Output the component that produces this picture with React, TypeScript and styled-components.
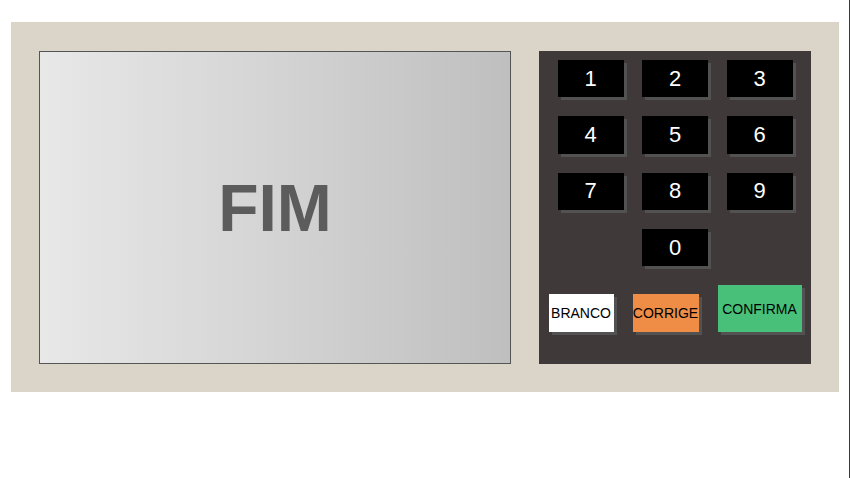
import React from "react";
import styled, { createGlobalStyle } from "styled-components";

const Global = createGlobalStyle`
  html, body { margin: 0; padding: 0; background: #ffffff; }
  body { font-family: "Liberation Sans", Arial, sans-serif; }
`;

const Page = styled.div`
  box-sizing: border-box;
  width: 850px;
  min-height: 100vh;
  border-right: 1px solid #3c3450;
  padding: 22px 0 0 11px;
`;

const Urna = styled.div`
  box-sizing: border-box;
  width: 828px;
  height: 370px;
  background: #dbd4c9;
  padding: 29px 28px 28px 28px;
  display: flex;
  gap: 28px;
`;

const Screen = styled.div`
  box-sizing: border-box;
  width: 472px;
  height: 313px;
  border: 1px solid #555555;
  background: linear-gradient(to right, #e8e8e8, #bfbfbf);
  display: flex;
  align-items: center;
  justify-content: center;
`;

const BigText = styled.div`
  font-family: "Liberation Sans", Arial, sans-serif;
  font-weight: bold;
  font-size: 66px;
  line-height: 1;
  color: #5c5c5c;
`;

const Keypad = styled.div`
  box-sizing: border-box;
  width: 272px;
  height: 313px;
  background: #403939;
  padding-top: 9px;
  display: flex;
  flex-direction: column;
  gap: 19px;
`;

const Row = styled.div<{ $spread?: "evenly" | "around"; $align?: string }>`
  display: flex;
  justify-content: ${(p) => (p.$spread === "around" ? "space-around" : "space-evenly")};
  align-items: ${(p) => p.$align ?? "center"};
`;

const Key = styled.div`
  width: 66px;
  height: 37.33px;
  background: #000000;
  color: #ffffff;
  font-family: "Liberation Sans", Arial, sans-serif;
  font-size: 22px;
  display: flex;
  align-items: center;
  justify-content: center;
  box-shadow: 3px 3px 0 #525252;
`;

const Action = styled.div<{ $bg: string; $w: number; $h: number }>`
  width: ${(p) => p.$w}px;
  height: ${(p) => p.$h}px;
  background: ${(p) => p.$bg};
  color: #000000;
  font-family: "Liberation Sans", Arial, sans-serif;
  font-size: 14px;
  display: flex;
  align-items: center;
  justify-content: center;
  white-space: nowrap;
  box-shadow: 3px 3px 0 #525252;
`;

const rows = [
  ["1", "2", "3"],
  ["4", "5", "6"],
  ["7", "8", "9"],
  ["0"],
];

export default function App() {
  return (
    <>
      <Global />
      <Page>
        <Urna>
          <Screen>
            <BigText>FIM</BigText>
          </Screen>
          <Keypad>
            {rows.map((r, i) => (
              <Row key={i}>
                {r.map((k) => (
                  <Key key={k}>{k}</Key>
                ))}
              </Row>
            ))}
            <Row $spread="around" $align="flex-end">
              <Action $bg="#ffffff" $w={65} $h={38}>BRANCO</Action>
              <Action $bg="#ef8c45" $w={66} $h={38}>CORRIGE</Action>
              <Action $bg="#48c07a" $w={84} $h={47}>CONFIRMA</Action>
            </Row>
          </Keypad>
        </Urna>
      </Page>
    </>
  );
}
